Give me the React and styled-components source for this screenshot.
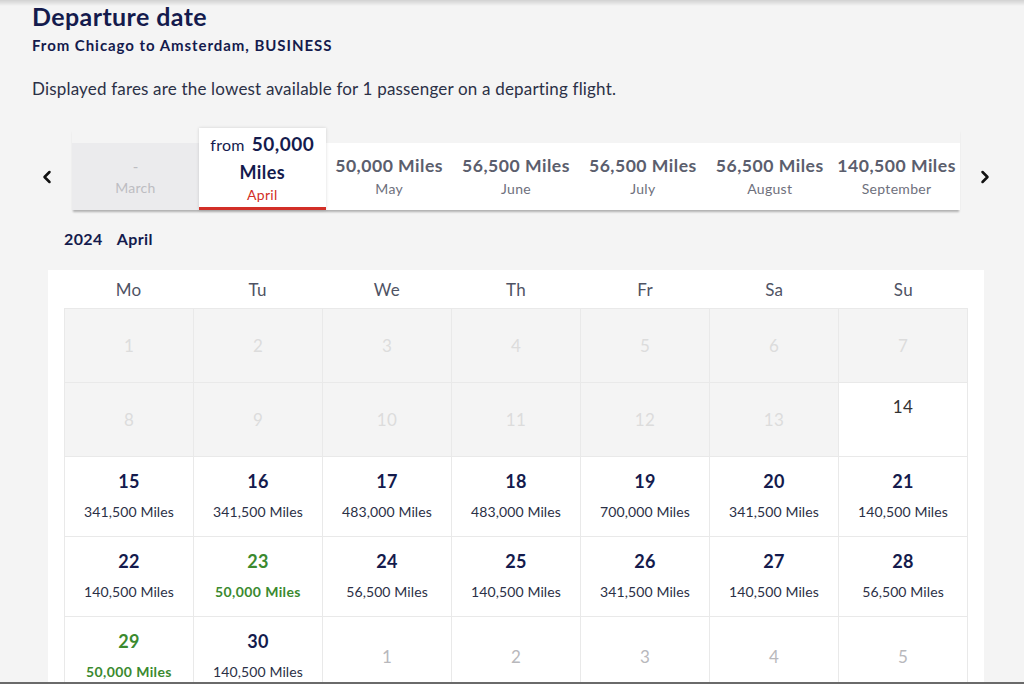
import React from "react";
import styled, { createGlobalStyle } from "styled-components";
import { ChevronLeft, ChevronRight } from "lucide-react";

const GlobalStyle = createGlobalStyle`
  html, body {
    margin: 0;
    padding: 0;
    background: #f4f4f4;
    font-family: Lato, "Open Sans", sans-serif;
    color: #141b4d;
    overflow: hidden;
  }
`;

const TopShade = styled.div`
  position: fixed;
  top: 0;
  left: 0;
  right: 0;
  height: 6px;
  background: linear-gradient(rgba(0, 0, 0, 0.14), rgba(0, 0, 0, 0));
  pointer-events: none;
`;

const BottomEdge = styled.div`
  position: fixed;
  bottom: 0;
  left: 0;
  right: 0;
  height: 2px;
  background: #6a6a6a;
`;

const Page = styled.div`
  padding-top: 1px;
`;

const Header = styled.div`
  padding-left: 32px;
`;

const Title = styled.h1`
  margin: 0;
  font-size: 25px;
  line-height: 30px;
  font-weight: 700;
  letter-spacing: 0.4px;
  color: #141b4d;
`;

const Subtitle = styled.div`
  margin-top: 5px;
  font-size: 15px;
  line-height: 18px;
  font-weight: 700;
  letter-spacing: 0.95px;
  color: #141b4d;
`;

const Description = styled.p`
  margin: 24px 0 0;
  font-size: 17px;
  line-height: 22px;
  letter-spacing: 0.18px;
  color: #2b3046;
`;

const TabsRow = styled.div`
  display: flex;
  align-items: flex-end;
  margin-top: 28px;
  padding-left: 32px;
`;

const Arrow = styled.button`
  width: 30px;
  height: 67px;
  display: flex;
  align-items: center;
  justify-content: center;
  border: none;
  background: none;
  padding: 0;
  color: #111;
  cursor: pointer;
  margin: ${(p) => (p.$side === "left" ? "0 10px 0 0" : "0 0 0 10px")};
`;

const Strip = styled.div`
  display: flex;
  align-items: flex-end;
  width: 888px;
  box-shadow: 0 3px 2px -1px rgba(0, 0, 0, 0.28);
`;

const Tab = styled.div`
  flex: 1;
  height: ${(p) => (p.$active ? "82px" : "67px")};
  display: flex;
  flex-direction: column;
  align-items: center;
  justify-content: center;
  box-sizing: border-box;
  background: ${(p) => (p.$disabled ? "#ebebed" : "#fff")};
  border-bottom: ${(p) => (p.$active ? "3px solid #d22f27" : "none")};
  position: relative;
  z-index: ${(p) => (p.$active ? 1 : 0)};
  box-shadow: ${(p) => (p.$active ? "0 0 3px rgba(0,0,0,0.15)" : "none")};
`;

const TabPrice = styled.div`
  font-size: 17.6px;
  line-height: 22px;
  font-weight: 700;
  letter-spacing: 0.5px;
  color: #5b5e6d;
  white-space: nowrap;
`;

const TabDash = styled.div`
  font-size: 15px;
  line-height: 20px;
  color: #bdbdc2;
`;

const TabMonth = styled.div`
  margin-top: 3px;
  font-size: 14px;
  line-height: 18px;
  letter-spacing: 0.3px;
  color: ${(p) => (p.$active ? "#d22f27" : p.$disabled ? "#bdbdc2" : "#6e707c")};
`;

const FromLine = styled.div`
  font-size: 16px;
  line-height: 24px;
  letter-spacing: 0.3px;
  color: #141b4d;
  white-space: nowrap;
  b {
    font-size: 19px;
    font-weight: 700;
    margin-left: 7px;
    letter-spacing: 0.5px;
  }
`;

const MilesLine = styled.div`
  margin-top: 4px;
  font-size: 18px;
  line-height: 22px;
  font-weight: 700;
  letter-spacing: 0.4px;
  color: #141b4d;
`;

const MonthHeading = styled.div`
  display: flex;
  gap: 14px;
  margin: 19px 0 0 64px;
  font-size: 16px;
  line-height: 20px;
  font-weight: 700;
  letter-spacing: 0.4px;
  color: #141b4d;
`;

const Panel = styled.div`
  margin: 21px 40px 0 48px;
  padding: 0 16px;
  background: #fff;
`;

const DayHeader = styled.div`
  display: grid;
  grid-template-columns: repeat(7, 1fr);
  height: 38px;
  align-items: center;
`;

const DayName = styled.div`
  text-align: center;
  font-size: 17px;
  letter-spacing: 0.3px;
  color: #4f5364;
`;

const Grid = styled.div`
  display: grid;
  grid-template-columns: repeat(7, 1fr);
  border-top: 1px solid #e9e9e9;
  border-left: 1px solid #e9e9e9;
`;

const Cell = styled.div`
  min-height: 74px;
  box-sizing: border-box;
  border-right: 1px solid #e9e9e9;
  border-bottom: 1px solid #e9e9e9;
  background: ${(p) => (p.$kind === "past" ? "#f4f4f4" : "#fff")};
  display: flex;
  flex-direction: column;
  align-items: center;
  justify-content: ${(p) => (p.$kind === "past" || p.$kind === "next" ? "center" : "flex-start")};
  padding: ${(p) => (p.$kind === "past" || p.$kind === "next" ? "0" : "14px 0 15px")};
`;

const DayNum = styled.div`
  font-size: ${(p) => (p.$kind === "priced" ? "18px" : "17px")};
  line-height: 20px;
  font-weight: ${(p) => (p.$kind === "priced" ? 700 : 400)};
  letter-spacing: 0.3px;
  color: ${(p) =>
    p.$kind === "past"
      ? "#dcdcdc"
      : p.$kind === "next"
      ? "#b8b8bc"
      : p.$kind === "plain"
      ? "#333"
      : p.$best
      ? "#3b8a2f"
      : "#141b4d"};
`;

const Price = styled.div`
  margin-top: 12px;
  font-size: 14px;
  line-height: 18px;
  font-weight: ${(p) => (p.$best ? 700 : 400)};
  letter-spacing: ${(p) => (p.$best ? "0.4px" : "0.1px")};
  color: ${(p) => (p.$best ? "#3b8a2f" : "#2b3046")};
  white-space: nowrap;
`;

const tabs = [
  { month: "March", disabled: true },
  { month: "April", price: "50,000", active: true },
  { month: "May", price: "50,000" },
  { month: "June", price: "56,500" },
  { month: "July", price: "56,500" },
  { month: "August", price: "56,500" },
  { month: "September", price: "140,500" },
];

const days = ["Mo", "Tu", "We", "Th", "Fr", "Sa", "Su"];

const prices = {
  15: "341,500", 16: "341,500", 17: "483,000", 18: "483,000", 19: "700,000",
  20: "341,500", 21: "140,500", 22: "140,500", 23: "50,000", 24: "56,500",
  25: "140,500", 26: "341,500", 27: "140,500", 28: "56,500", 29: "50,000",
  30: "140,500",
};

const cells = [];
for (let d = 1; d <= 13; d++) cells.push({ n: d, kind: "past" });
cells.push({ n: 14, kind: "plain" });
for (let d = 15; d <= 30; d++) cells.push({ n: d, kind: "priced", price: prices[d], best: prices[d] === "50,000" });
for (let d = 1; d <= 5; d++) cells.push({ n: d, kind: "next" });

function MonthTab({ tab }) {
  if (tab.disabled) {
    return (
      <Tab $disabled>
        <TabDash>-</TabDash>
        <TabMonth $disabled>{tab.month}</TabMonth>
      </Tab>
    );
  }
  if (tab.active) {
    return (
      <Tab $active>
        <FromLine>
          from<b>{tab.price}</b>
        </FromLine>
        <MilesLine>Miles</MilesLine>
        <TabMonth $active>{tab.month}</TabMonth>
      </Tab>
    );
  }
  return (
    <Tab>
      <TabPrice>{tab.price} Miles</TabPrice>
      <TabMonth>{tab.month}</TabMonth>
    </Tab>
  );
}

export default function App() {
  return (
    <Page>
      <GlobalStyle />
      <TopShade />
      <Header>
        <Title>Departure date</Title>
        <Subtitle>From Chicago to Amsterdam, BUSINESS</Subtitle>
        <Description>
          Displayed fares are the lowest available for 1 passenger on a departing flight.
        </Description>
      </Header>

      <TabsRow>
        <Arrow $side="left" aria-label="Previous month">
          <ChevronLeft size={20} strokeWidth={3} />
        </Arrow>
        <Strip>
          {tabs.map((t) => (
            <MonthTab key={t.month} tab={t} />
          ))}
        </Strip>
        <Arrow $side="right" aria-label="Next month">
          <ChevronRight size={20} strokeWidth={3} />
        </Arrow>
      </TabsRow>

      <MonthHeading>
        <span>2024</span>
        <span>April</span>
      </MonthHeading>

      <Panel>
        <DayHeader>
          {days.map((d) => (
            <DayName key={d}>{d}</DayName>
          ))}
        </DayHeader>
        <Grid>
          {cells.map((c, i) => (
            <Cell key={i} $kind={c.kind}>
              <DayNum $kind={c.kind} $best={c.best}>
                {c.n}
              </DayNum>
              {c.price && <Price $best={c.best}>{c.price} Miles</Price>}
            </Cell>
          ))}
        </Grid>
      </Panel>
      <BottomEdge />
    </Page>
  );
}
